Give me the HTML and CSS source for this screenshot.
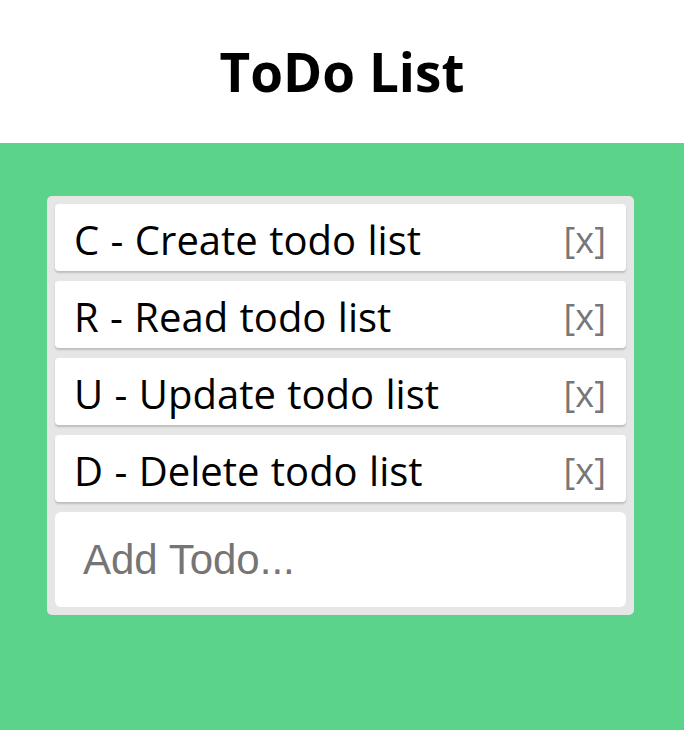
FILE: index.html
```html
<!DOCTYPE html>
<html>
<head>
<meta charset="utf-8">
<link rel="stylesheet" href="styles.css">
</head>
<body>
<header class="header"><h1 class="title">ToDo List</h1></header>
<main class="main">
  <div class="board">
    <div class="todo"><span class="todo-text">C - Create todo list</span><span class="del">[x]</span></div>
    <div class="todo"><span class="todo-text">R - Read todo list</span><span class="del">[x]</span></div>
    <div class="todo"><span class="todo-text">U - Update todo list</span><span class="del">[x]</span></div>
    <div class="todo"><span class="todo-text">D - Delete todo list</span><span class="del">[x]</span></div>
    <input class="add" type="text" placeholder="Add Todo...">
  </div>
</main>
</body>
</html>
```
FILE: styles.css
```css
html, body { margin: 0; padding: 0; }
body {
  font-family: "Open Sans", "Noto Sans", sans-serif;
  background: #5bd38a;
  height: 730px;
}
.header {
  background: #fff;
  height: 143px;
  display: flex;
  align-items: center;
  justify-content: center;
}
.title {
  margin: 0;
  font-size: 53px;
  font-weight: 700;
  color: #000;
}
.main {
  padding: 53px 50px 0 47px;
}
.board {
  background: #e6e6e6;
  border-radius: 5px;
  padding: 8px;
  display: flex;
  flex-direction: column;
  gap: 10px;
}
.todo {
  background: #fff;
  height: 67px;
  border-radius: 4px;
  box-shadow: 0 2px 2px rgba(0,0,0,0.18);
  display: flex;
  align-items: center;
  justify-content: space-between;
  padding: 4px 20px 0 19px;
  box-sizing: border-box;
  color: #000;
}
.todo-text {
  font-size: 40px;
  word-spacing: 1px;
}
.del {
  color: #777;
  font-size: 36px;
}
.add {
  height: 95px;
  border: none;
  border-radius: 6px;
  background: #fff;
  padding: 0 28px;
  box-sizing: border-box;
  font-family: "Liberation Sans", Arial, sans-serif;
  font-size: 42px;
  outline: none;
}
.add::placeholder { color: #757575; }
```
